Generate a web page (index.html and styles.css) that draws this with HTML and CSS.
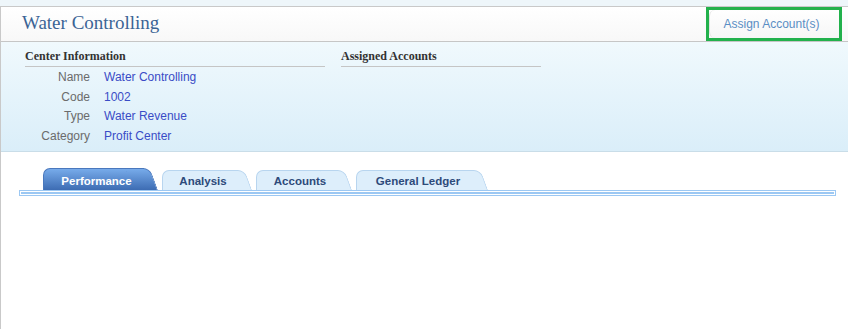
FILE: index.html
```html
<!DOCTYPE html>
<html lang="en">
<head>
    <meta charset="UTF-8">
    <title>Water Controlling</title>
    <link rel="stylesheet" href="styles.css">
</head>
<body>

<div class="page">
    <div class="page-header">
        <h1>Water Controlling</h1>
        <a href="#" class="assign-btn"><span>Assign Account(s)</span></a>
    </div>

    <div class="info-panel">
        <div class="info-col">
            <h3>Center Information</h3>
            <div class="info-row"><span class="lbl">Name</span><span class="val">Water Controlling</span></div>
            <div class="info-row"><span class="lbl">Code</span><span class="val">1002</span></div>
            <div class="info-row"><span class="lbl">Type</span><span class="val">Water Revenue</span></div>
            <div class="info-row"><span class="lbl">Category</span><span class="val">Profit Center</span></div>
        </div>
        <div class="info-col narrow">
            <h3>Assigned Accounts</h3>
        </div>
    </div>

    <div class="tab-area">
        <ul class="tabs">
            <li class="tab active" style="width:115px">Performance</li>
            <li class="tab" style="width:90px">Analysis</li>
            <li class="tab" style="width:96px">Accounts</li>
            <li class="tab" style="width:132px">General Ledger</li>
        </ul>
        <div class="tab-strip"></div>
    </div>
</div>

</body>
</html>
```

FILE: styles.css
```css
/* page */
body {
    margin: 0;
    padding: 0;
    background-color: #eef6fa;
    font-family: 'Liberation Sans', Arial, sans-serif;
}
.page {
    margin-top: 6px;
    height: 323px;
    background-color: #fff;
    border-top: 1px solid #c9c9c9;
    border-left: 1px solid #c9c9c9;
    box-sizing: border-box;
}

/* header */
.page-header {
    display: flex;
    align-items: stretch;
    justify-content: space-between;
    height: 34px;
    background: linear-gradient(#fff, #f8f8f8);
    border-bottom: 1px solid #c6c6c6;
}
.page-header h1 {
    margin: 0;
    padding-left: 21px;
    font-family: 'Liberation Serif', 'Times New Roman', serif;
    font-size: 19px;
    font-weight: normal;
    line-height: 32px;
    color: #3b6495;
}
.assign-btn {
    display: flex;
    margin-right: 6px;
    width: 136px;
    box-sizing: border-box;
    border: 3px solid #22b14c;
    text-decoration: none;
}
.assign-btn span {
    flex: 1;
    border-left: 1px solid #e2e2e2;
    border-radius: 6px 0 0 6px;
    background: linear-gradient(#fff, #f6f6f6);
    color: #5a8ec4;
    font-size: 12px;
    line-height: 28px;
    text-align: center;
    padding-right: 6px;
}

/* center info */
.info-panel {
    display: flex;
    gap: 16px;
    height: 110px;
    padding-left: 24px;
    background: linear-gradient(#f0f9fd, #daeef9);
    border-bottom: 1px solid #c9dde8;
    box-sizing: border-box;
}
.info-col {
    width: 300px;
}
.info-col.narrow {
    width: 200px;
}
.info-col h3 {
    margin: 0 0 1px;
    padding-top: 6px;
    font-family: 'Liberation Serif', 'Times New Roman', serif;
    font-size: 12px;
    font-weight: bold;
    line-height: 16px;
    color: #333;
    border-bottom: 1px solid #c5c5c5;
    padding-bottom: 2px;
}
.info-row {
    display: flex;
    font-size: 12px;
    line-height: 19.6px;
}
.lbl {
    width: 65px;
    text-align: right;
    color: #6b6b6b;
}
.val {
    margin-left: 14px;
    color: #3a4cc6;
}

/* tabs */
.tab-area {
    padding: 16px 12px 0 18px;
}
.tabs {
    display: flex;
    gap: 4px;
    margin: 0 0 0 24px;
    padding: 0;
    list-style: none;
    height: 22px;
    align-items: flex-end;
}
.tab {
    position: relative;
    height: 20px;
    line-height: 22px;
    font-size: 11.5px;
    font-weight: bold;
    color: #2d4a7a;
    text-align: center;
    padding-right: 8px;
    box-sizing: border-box;
    z-index: 0;
}
.tab::before,
.tab::after {
    content: '';
    position: absolute;
    top: 0;
    bottom: 0;
    background: #ddeefb;
    border-top: 1px solid #b8d5ef;
    z-index: -1;
}
.tab::before {
    left: 0;
    right: 14px;
    border-left: 1px solid #b8d5ef;
    border-radius: 7px 0 0 0;
}
.tab::after {
    right: 0;
    width: 24px;
    border-right: 1px solid #b8d5ef;
    border-radius: 0 7px 0 0;
    transform: skewX(20deg);
    transform-origin: bottom;
}
.tab.active {
    height: 22px;
    line-height: 26px;
    color: #fff;
}
.tab.active::before,
.tab.active::after {
    background: linear-gradient(#77abea, #3d6cb3);
    border-color: #4a78bd;
}
.tab-strip {
    height: 6px;
    border: 1px solid #9cc8f3;
    background: #fff;
    box-sizing: border-box;
    padding: 1px;
}
.tab-strip::after {
    content: '';
    display: block;
    height: 2px;
    background: #9cc8f3;
}
```
